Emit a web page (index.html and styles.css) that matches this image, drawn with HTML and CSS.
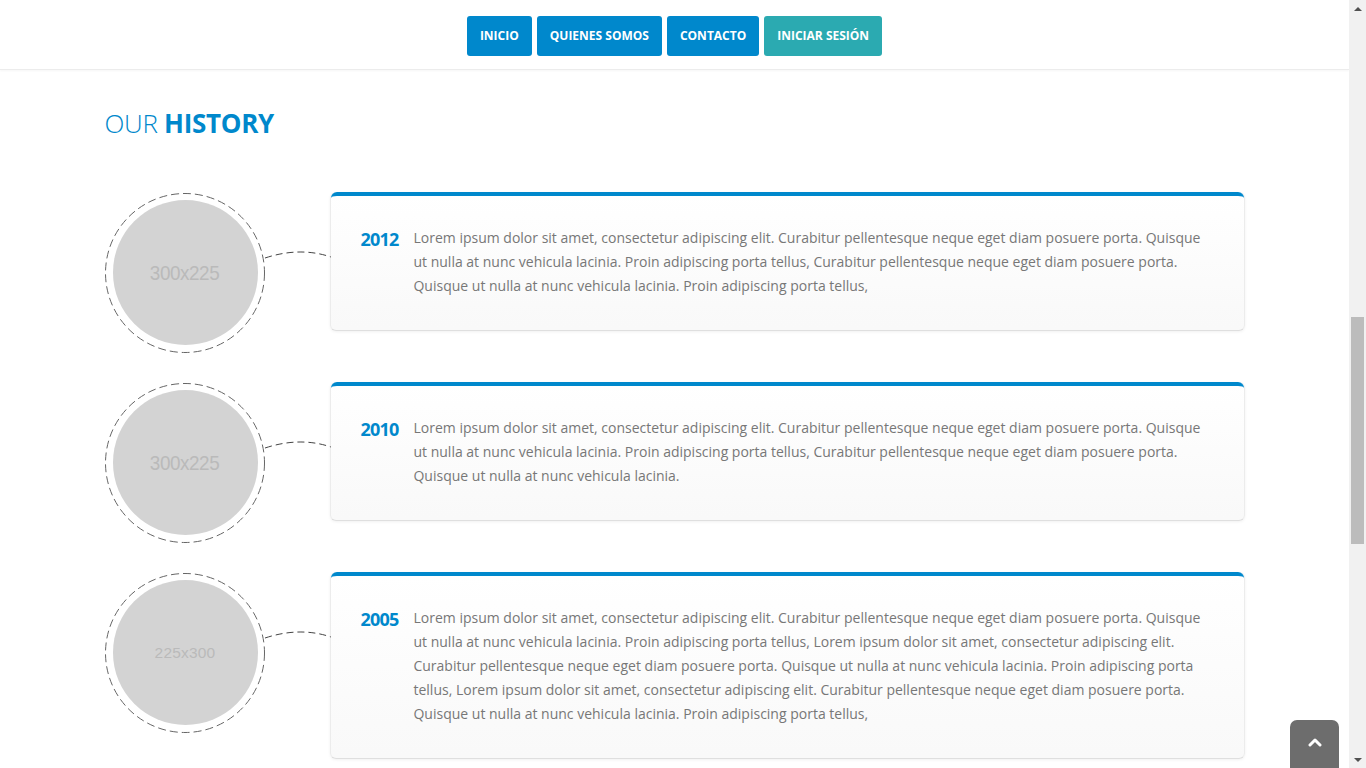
FILE: index.html
```html
<!DOCTYPE html>
<html lang="es">
<head>
<meta charset="utf-8">
<title>Our History</title>
<link rel="stylesheet" href="styles.css">
</head>
<body>
<header class="site-header">
  <nav class="nav">
    <a class="btn btn-primary" href="#">Inicio</a>
    <a class="btn btn-primary" href="#">Quienes somos</a>
    <a class="btn btn-primary" href="#">Contacto</a>
    <a class="btn btn-tertiary" href="#">Iniciar sesión</a>
  </nav>
</header>

<main class="container">
  <h2 class="title">Our <strong>History</strong></h2>

  <ul class="history">
    <li class="history-item">
      <div class="thumb">
        <svg class="thumb-frame" width="227" height="166" viewBox="0 0 227 166">
          <circle cx="80" cy="80" r="79.5" fill="none" stroke="#666" stroke-width="1" stroke-dasharray="8 4"/>
          <path d="M160,65 Q195,53.5 226,64" fill="none" stroke="#444" stroke-width="1" stroke-dasharray="7 4"/>
        </svg>
        <div class="photo"><span>300x225</span></div>
      </div>
      <div class="featured-box">
        <div class="box-content">
          <h4 class="year">2012</h4>
          <p>Lorem ipsum dolor sit amet, consectetur adipiscing elit. Curabitur pellentesque neque eget diam posuere porta. Quisque ut nulla at nunc vehicula lacinia. Proin adipiscing porta tellus, Curabitur pellentesque neque eget diam posuere porta. Quisque ut nulla at nunc vehicula lacinia. Proin adipiscing porta tellus,</p>
        </div>
      </div>
    </li>
    <li class="history-item">
      <div class="thumb">
        <svg class="thumb-frame" width="227" height="166" viewBox="0 0 227 166">
          <circle cx="80" cy="80" r="79.5" fill="none" stroke="#666" stroke-width="1" stroke-dasharray="8 4"/>
          <path d="M160,65 Q195,53.5 226,64" fill="none" stroke="#444" stroke-width="1" stroke-dasharray="7 4"/>
        </svg>
        <div class="photo"><span>300x225</span></div>
      </div>
      <div class="featured-box">
        <div class="box-content">
          <h4 class="year">2010</h4>
          <p>Lorem ipsum dolor sit amet, consectetur adipiscing elit. Curabitur pellentesque neque eget diam posuere porta. Quisque ut nulla at nunc vehicula lacinia. Proin adipiscing porta tellus, Curabitur pellentesque neque eget diam posuere porta. Quisque ut nulla at nunc vehicula lacinia.</p>
        </div>
      </div>
    </li>
    <li class="history-item">
      <div class="thumb">
        <svg class="thumb-frame" width="227" height="166" viewBox="0 0 227 166">
          <circle cx="80" cy="80" r="79.5" fill="none" stroke="#666" stroke-width="1" stroke-dasharray="8 4"/>
          <path d="M160,65 Q195,53.5 226,64" fill="none" stroke="#444" stroke-width="1" stroke-dasharray="7 4"/>
        </svg>
        <div class="photo photo-portrait"><span>225x300</span></div>
      </div>
      <div class="featured-box">
        <div class="box-content">
          <h4 class="year">2005</h4>
          <p>Lorem ipsum dolor sit amet, consectetur adipiscing elit. Curabitur pellentesque neque eget diam posuere porta. Quisque ut nulla at nunc vehicula lacinia. Proin adipiscing porta tellus, Lorem ipsum dolor sit amet, consectetur adipiscing elit. Curabitur pellentesque neque eget diam posuere porta. Quisque ut nulla at nunc vehicula lacinia. Proin adipiscing porta tellus, Lorem ipsum dolor sit amet, consectetur adipiscing elit. Curabitur pellentesque neque eget diam posuere porta. Quisque ut nulla at nunc vehicula lacinia. Proin adipiscing porta tellus,</p>
        </div>
      </div>
    </li>
  </ul>
</main>

<a class="scroll-top" href="#" aria-label="Subir">
  <svg width="14" height="10" viewBox="0 0 14 10"><path d="M2,8 L7,3 L12,8" fill="none" stroke="#fff" stroke-width="3" stroke-linecap="round" stroke-linejoin="round"/></svg>
</a>

<div class="scrollbar" aria-hidden="true">
  <span class="sb-arrow sb-up"></span>
  <span class="sb-track"><span class="sb-thumb"></span></span>
  <span class="sb-arrow sb-down"></span>
</div>
</body>
</html>
```

FILE: styles.css
```css
* { box-sizing: border-box; }

html, body { overflow: hidden; }

body {
  margin: 0;
  padding-right: 17px;
  background: #fff;
  font-family: "Open Sans", "Liberation Sans", sans-serif;
  font-size: 14px;
  line-height: 24px;
  color: #777;
}

.site-header {
  height: 70px;
  background: #fff;
  border-bottom: 1px solid #ececec;
  box-shadow: 0 1px 2px rgba(0, 0, 0, 0.04);
  display: flex;
  justify-content: center;
  padding-top: 16px;
}

.nav {
  display: flex;
  gap: 5px;
  height: 40px;
}

.btn {
  display: flex;
  align-items: center;
  padding: 0 13px;
  height: 40px;
  border-radius: 3px;
  color: #fff;
  text-decoration: none;
  text-transform: uppercase;
  font-weight: 700;
  font-size: 12px;
}

.btn-primary { background: #0088cc; }
.btn-tertiary { background: #2baab1; }

.container {
  width: 1170px;
  margin: 0 auto;
  padding: 0 15px;
}

.title {
  margin: 32px 0 48px;
  font-size: 26px;
  line-height: 42px;
  font-weight: 300;
  color: #0088cc;
  text-transform: uppercase;
  letter-spacing: -0.3px;
}

.title strong { font-weight: 700; }

.history {
  list-style: none;
  margin: 0;
  padding: 0;
}

.history-item {
  display: flex;
  align-items: flex-start;
  margin-bottom: 29px;
}

.thumb {
  position: relative;
  flex: 0 0 225px;
  height: 161px;
  padding-top: 1px;
}

.thumb-frame {
  position: absolute;
  left: 0;
  top: 1px;
}

.photo {
  position: relative;
  margin: 7px 0 0 8px;
  width: 145px;
  height: 145px;
  border-radius: 50%;
  background: #d3d3d3;
  display: flex;
  align-items: center;
  justify-content: center;
  font-family: "Liberation Sans", Arial, sans-serif;
  color: #bababa;
  font-size: 21px;
  line-height: 1;
}

.photo span {
  display: block;
  letter-spacing: -0.5px;
  transform: scaleX(0.9);
}

.photo-portrait { font-size: 15.5px; }

.photo-portrait span {
  letter-spacing: 0.2px;
  transform: none;
}

.featured-box {
  flex: 1;
  background: linear-gradient(to bottom, #fff 1%, #f9f9f9 98%);
  border-left: 1px solid #ececec;
  border-right: 1px solid #ececec;
  border-bottom: 1px solid #dfdfdf;
  border-radius: 6px;
  box-shadow: 0 1px 3px rgba(0, 0, 0, 0.06);
}

.box-content {
  display: flex;
  align-items: flex-start;
  border-top: 4px solid #0088cc;
  border-radius: 6px 6px 0 0;
  padding: 30px 30px 12px 30px;
}

.year {
  flex: 0 0 auto;
  margin: 4px 15px 0 0;
  font-size: 18px;
  line-height: 18px;
  font-weight: 700;
  color: #0088cc;
  letter-spacing: -0.8px;
}

.box-content p {
  margin: 0 0 20px;
}

.scroll-top {
  position: fixed;
  right: 27px;
  bottom: 0;
  width: 49px;
  height: 48px;
  background: #6d6d6d;
  border-radius: 7px 7px 0 0;
  display: flex;
  align-items: center;
  justify-content: center;
  padding-bottom: 4px;
}

/* drawn window scrollbar */
.scrollbar {
  position: fixed;
  top: 0;
  right: 0;
  width: 17px;
  height: 100vh;
  background: #f1f1f1;
  display: flex;
  flex-direction: column;
}

.sb-arrow {
  flex: 0 0 17px;
  display: flex;
  align-items: center;
  justify-content: center;
}

.sb-arrow::before {
  content: "";
  border-left: 4px solid transparent;
  border-right: 4px solid transparent;
}

.sb-up::before { border-bottom: 4px solid #505050; }
.sb-down::before { border-top: 4px solid #505050; }

.sb-track {
  flex: 1;
  padding: 300px 2px 0;
}

.sb-thumb {
  display: block;
  height: 227px;
  background: #bcbcbc;
}
```
